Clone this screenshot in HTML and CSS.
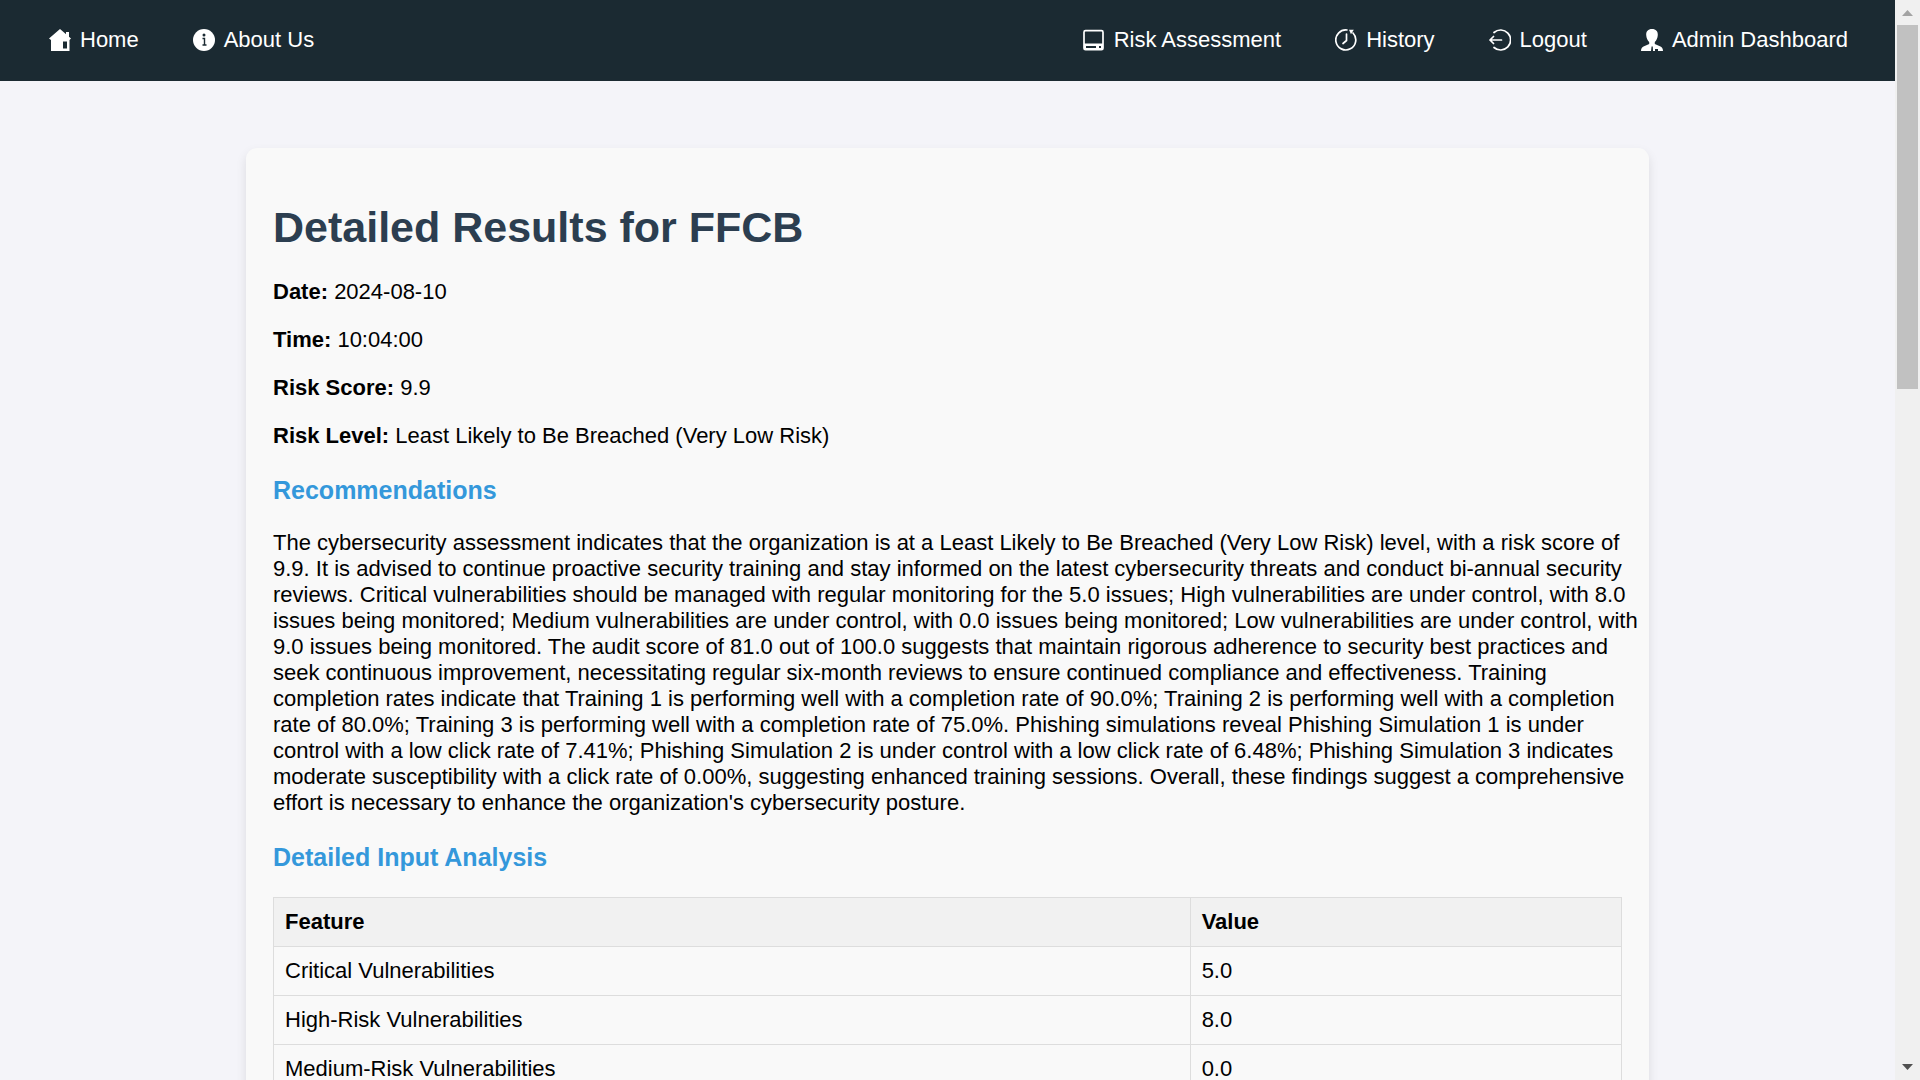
FILE: index.html
```html
<!DOCTYPE html>
<html lang="en">
<head>
<meta charset="utf-8">
<meta name="viewport" content="width=device-width, initial-scale=1">
<title>Detailed Results for FFCB</title>
<link rel="stylesheet" href="styles.css">
</head>
<body>
<div class="page">
  <nav class="navbar">
    <div class="nav-group">
      <a class="nav-link" href="#home">
        <svg class="icon" viewBox="0 0 22 22" aria-hidden="true"><path fill="#fff" fill-rule="evenodd" d="M11 0 22 9.500 20.500 11V22H2V11L0 9.500ZM14 12.500V19.500H18V12.500Z"/><path fill="#fff" d="M17 3h3v6l-3-2.500Z"/></svg>
        <span>Home</span>
      </a>
      <a class="nav-link" href="#about">
        <svg class="icon" viewBox="0 0 22 22" aria-hidden="true"><circle cx="11" cy="11" r="11" fill="#fff"/><circle cx="11" cy="6" r="1.500" fill="#1b2a32"/><path d="M9.500 9.500h2v6M9.500 16h4" fill="none" stroke="#1b2a32" stroke-width="1.400"/></svg>
        <span>About Us</span>
      </a>
    </div>
    <div class="nav-group">
      <a class="nav-link" href="#risk">
        <svg class="icon" viewBox="0 0 22 22" aria-hidden="true"><rect x="1" y="1.700" width="19" height="19" rx="1.500" fill="none" stroke="#fff" stroke-width="1.700"/><path fill="#fff" d="M1 14.500h19v6H1z"/><path fill="#1b2a32" d="M3 17h10v2H3zM16 17h2v2h-2z"/></svg>
        <span>Risk Assessment</span>
      </a>
      <a class="nav-link" href="#history">
        <svg class="icon" viewBox="0 0 22 22" aria-hidden="true"><g fill="none" stroke="#fff" stroke-width="1.700" stroke-linecap="round"><path d="M18 4a10 10 0 1 1-6-3"/><path d="M11.500 5v6.500L8 14.500"/></g><path fill="#fff" d="M14 .800h4.800L16 5.200Z"/></svg>
        <span>History</span>
      </a>
      <a class="nav-link" href="#logout">
        <svg class="icon" viewBox="0 0 22 22" aria-hidden="true"><g fill="none" stroke="#fff" stroke-width="1.700" stroke-linecap="round" stroke-linejoin="round"><path d="M5 3.500a10 10 0 1 1 0 15"/><path d="M12.500 11H1M4.500 7.500 1 11l3.500 3.500"/></g></svg>
        <span>Logout</span>
      </a>
      <a class="nav-link" href="#admin">
        <svg class="icon" viewBox="0 0 22 22" aria-hidden="true"><path fill="#fff" d="M11 0c-4 0-6 2.500-5.800 6 .200 3 1.300 5.500 3 7v2L2.500 17.500C.800 18.300 0 20 0 22H10l.500-4 .500-1 .800 1 .200 4H22c0-2-.800-3.700-2.500-4.500L13.800 15v-2c1.700-1.500 2.800-4 3-7C17 2.500 15 0 11 0Z"/><path d="M14 20h3v2h-3z" fill="#1b2a32"/></svg>
        <span>Admin Dashboard</span>
      </a>
    </div>
  </nav>
  <main class="card">
    <h1>Detailed Results for FFCB</h1>
    <p><strong>Date:</strong> 2024-08-10</p>
    <p><strong>Time:</strong> 10:04:00</p>
    <p><strong>Risk Score:</strong> 9.9</p>
    <p><strong>Risk Level:</strong> Least Likely to Be Breached (Very Low Risk)</p>
    <h2>Recommendations</h2>
    <p class="recommendation">The cybersecurity assessment indicates that the organization is at a Least Likely to Be Breached (Very Low Risk) level, with a risk score of<br>
      9.9. It is advised to continue proactive security training and stay informed on the latest cybersecurity threats and conduct bi-annual security<br>
      reviews. Critical vulnerabilities should be managed with regular monitoring for the 5.0 issues; High vulnerabilities are under control, with 8.0<br>
      issues being monitored; Medium vulnerabilities are under control, with 0.0 issues being monitored; Low vulnerabilities are under control, with<br>
      9.0 issues being monitored. The audit score of 81.0 out of 100.0 suggests that maintain rigorous adherence to security best practices and<br>
      seek continuous improvement, necessitating regular six-month reviews to ensure continued compliance and effectiveness. Training<br>
      completion rates indicate that Training 1 is performing well with a completion rate of 90.0%; Training 2 is performing well with a completion<br>
      rate of 80.0%; Training 3 is performing well with a completion rate of 75.0%. Phishing simulations reveal Phishing Simulation 1 is under<br>
      control with a low click rate of 7.41%; Phishing Simulation 2 is under control with a low click rate of 6.48%; Phishing Simulation 3 indicates<br>
      moderate susceptibility with a click rate of 0.00%, suggesting enhanced training sessions. Overall, these findings suggest a comprehensive<br>
      effort is necessary to enhance the organization's cybersecurity posture.</p>
    <h2>Detailed Input Analysis</h2>
    <table>
      <thead>
        <tr><th class="feature" scope="col">Feature</th><th scope="col">Value</th></tr>
      </thead>
      <tbody>
        <tr><td>Critical Vulnerabilities</td><td>5.0</td></tr>
        <tr><td>High-Risk Vulnerabilities</td><td>8.0</td></tr>
        <tr><td>Medium-Risk Vulnerabilities</td><td>0.0</td></tr>
      </tbody>
    </table>
  </main>
</div>
<div class="scrollbar" aria-hidden="true">
  <svg class="arrow" viewBox="0 0 11 6"><path fill="#a3a3a3" d="M5.500 0 11 6H0Z"/></svg>
  <div class="thumb"></div>
  <svg class="arrow" viewBox="0 0 11 6"><path fill="#505050" d="M0 0H11L5.500 6Z"/></svg>
</div>
</body>
</html>
```
FILE: styles.css
```css
* {
  box-sizing: border-box;
}

body {
  display: flex;
  height: 100vh;
  margin: 0;
  overflow: hidden;
  background: #f4f4f9;
  color: #000;
  font-family: "Liberation Sans", Arial, sans-serif;
  font-size: 22px;
  line-height: 26px;
}

.page {
  flex: 1;
  min-width: 0;
  overflow: hidden;
}

.navbar {
  display: flex;
  justify-content: space-between;
  padding: 27px 20px 28px 22px;
  background: #1b2a32;
}

.nav-group {
  display: flex;
}

.nav-link {
  display: flex;
  align-items: center;
  gap: 9px;
  padding: 0 27px;
  color: #fff;
  text-decoration: none;
  white-space: nowrap;
}

.icon {
  width: 22px;
  height: 22px;
  flex: none;
}

.card {
  max-width: 1403px;
  margin: 67px auto;
  padding: 27px;
  border-radius: 11px;
  background: #f9f9f9;
  box-shadow: 0 5px 11px rgba(0, 0, 0, 0.1);
}

h1 {
  margin: 27px 0;
  color: #2c3e50;
  font-size: 43px;
  line-height: 50px;
}

h2 {
  margin: 27px 0 26px;
  color: #3498db;
  font-size: 25px;
  line-height: 28px;
}

p {
  margin: 0 0 22px;
}

.recommendation {
  white-space: nowrap;
}

table {
  width: 100%;
  border-collapse: collapse;
}

th,
td {
  padding: 11px;
  border: 1px solid #ddd;
  text-align: left;
}

th {
  background: #f1f1f1;
}

.feature {
  width: 68%;
}

.scrollbar {
  display: flex;
  flex-direction: column;
  align-items: center;
  flex: none;
  width: 25px;
  padding: 10px 2px;
  background: #f0f0f0;
}

.arrow {
  width: 11px;
  height: 6px;
}

.thumb {
  width: 21px;
  height: 364px;
  margin: 9px 0 auto;
  background: #c1c1c1;
}
```
